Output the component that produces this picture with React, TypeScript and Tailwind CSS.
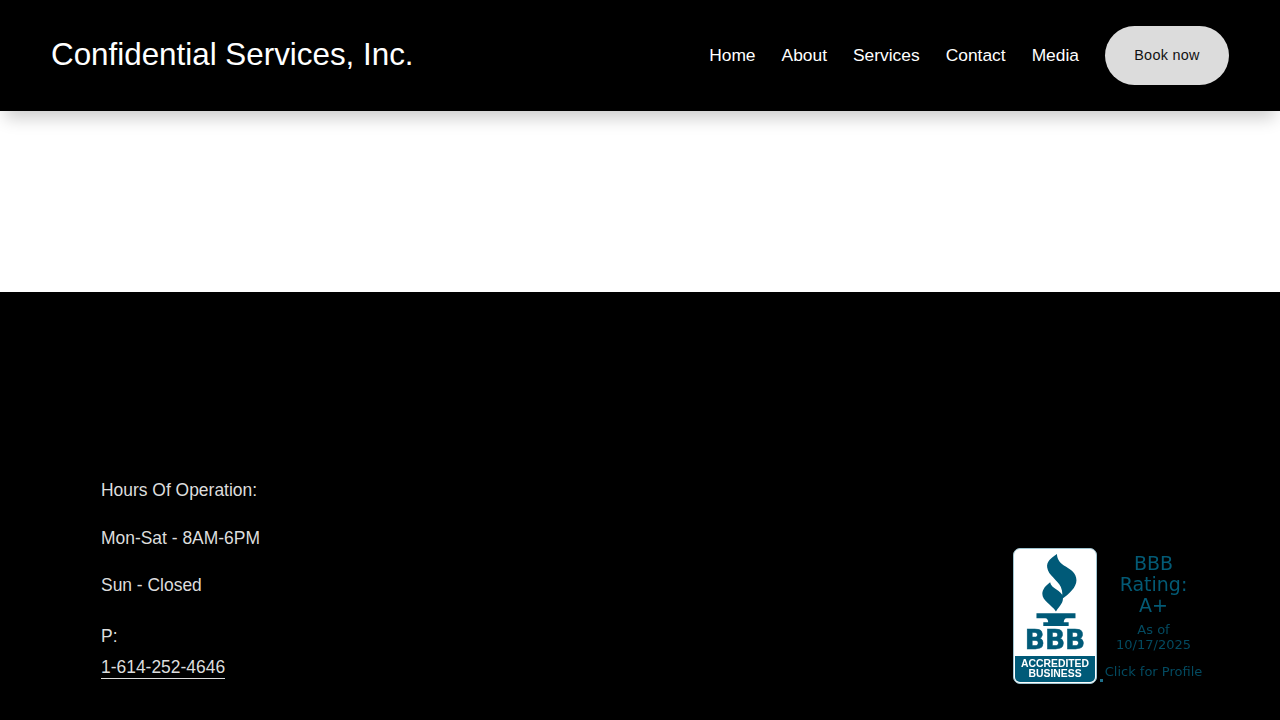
import React from 'react';

const NAV = ['Home', 'About', 'Services', 'Contact', 'Media'];

const BbbSeal: React.FC = () => (
  <div className="relative w-[84px] h-[136px] bg-white rounded-[7px] border border-[#9fc4d0] flex flex-col items-center">
    <svg viewBox="0 0 84 81" className="w-[82px] h-[79px] shrink-0" fill="#005a78">
      <path d="M44 5 C38 9 33 13 34 19 C35 27 45 32 48 39 C50 44 50 48 48 52 C57 46 64 39 64 32 C64 25 58 21 53 18 C48 15 44 11 44 5 Z" />
      <path d="M37 34 C33 37 29 41 29 46 C29 53 38 57 43 64 C47 58 51 55 50 49 C49 42 38 41 37 34 Z" />
      <path d="M23 66 H63 V71 H54 C52 71 51 73 51 75 H56 V79 H30 V75 H35 C35 73 34 71 32 71 H23 Z" />
    </svg>
    <div className="text-[#005a78] font-['DejaVu_Sans',sans-serif] font-bold text-[26.5px] leading-[22px] [-webkit-text-stroke:0.5px_#005a78] mt-[1px]">BBB</div>
    <div className="mt-auto mb-[1px] w-[80px] h-[26px] rounded-b-[5px] bg-[#005a78] flex flex-col items-center justify-center text-white font-bold text-[10.4px] leading-[10px]">
      <span>ACCREDITED</span>
      <span>BUSINESS</span>
    </div>
    <div className="absolute left-[86px] bottom-[1px] w-[3px] h-[3px] bg-[#1f6f8a]" />
  </div>
);

const App: React.FC = () => {
  return (
    <div className="font-['Liberation_Sans',Arial,sans-serif] bg-white h-[720px] overflow-hidden flex flex-col">
      <header className="relative z-10 h-[111px] shrink-0 bg-black flex items-center justify-between px-[51px] shadow-[0_12px_16px_-5px_rgba(0,0,0,0.2)]">
        <div className="text-white text-[31.36px] leading-none mt-[-2px]">Confidential Services, Inc.</div>
        <nav className="flex items-center gap-[26px]">
          {NAV.map(item => (
            <a key={item} className="text-white text-[17.4px] leading-none">
              {item}
            </a>
          ))}
          <a className="w-[124px] h-[59px] rounded-full bg-[#dcdcdc] text-[#111] text-[14.4px] tracking-[0.3px] flex items-center justify-center">
            Book now
          </a>
        </nav>
      </header>

      <main className="h-[181px] shrink-0 bg-white" />

      <footer className="flex-1 bg-black flex justify-between pl-[101px] pr-[74px] pt-[188px]">
        <div className="text-[#dddddd] text-[17.44px] leading-[21px]">
          <p>Hours Of Operation:</p>
          <p className="mt-[27px]">Mon-Sat - 8AM-6PM</p>
          <p className="mt-[26px]">Sun - Closed</p>
          <p className="mt-[30px]">P:</p>
          <a className="inline-block mt-[10px] border-b border-[#dddddd]">1-614-252-4646</a>
        </div>

        <div className="flex items-start pt-[68px] blur-[0.4px]">
          <BbbSeal />
          <div className="w-[105px] ml-[4px] flex flex-col items-center text-[#035a75] text-center font-['DejaVu_Sans',sans-serif]">
            <div className="text-[19px] leading-[21px] mt-[5px]">BBB</div>
            <div className="text-[19px] leading-[21px]">Rating:</div>
            <div className="text-[19px] leading-[21px]">A+</div>
            <div className="text-[13px] leading-[15px] mt-[6px] text-[#034a60]">As of</div>
            <div className="text-[13px] leading-[15px] text-[#034a60]">10/17/2025</div>
            <div className="text-[13px] leading-[15px] mt-[12px] text-[#034a60]">Click for Profile</div>
          </div>
        </div>
      </footer>
    </div>
  );
};

export default App;
